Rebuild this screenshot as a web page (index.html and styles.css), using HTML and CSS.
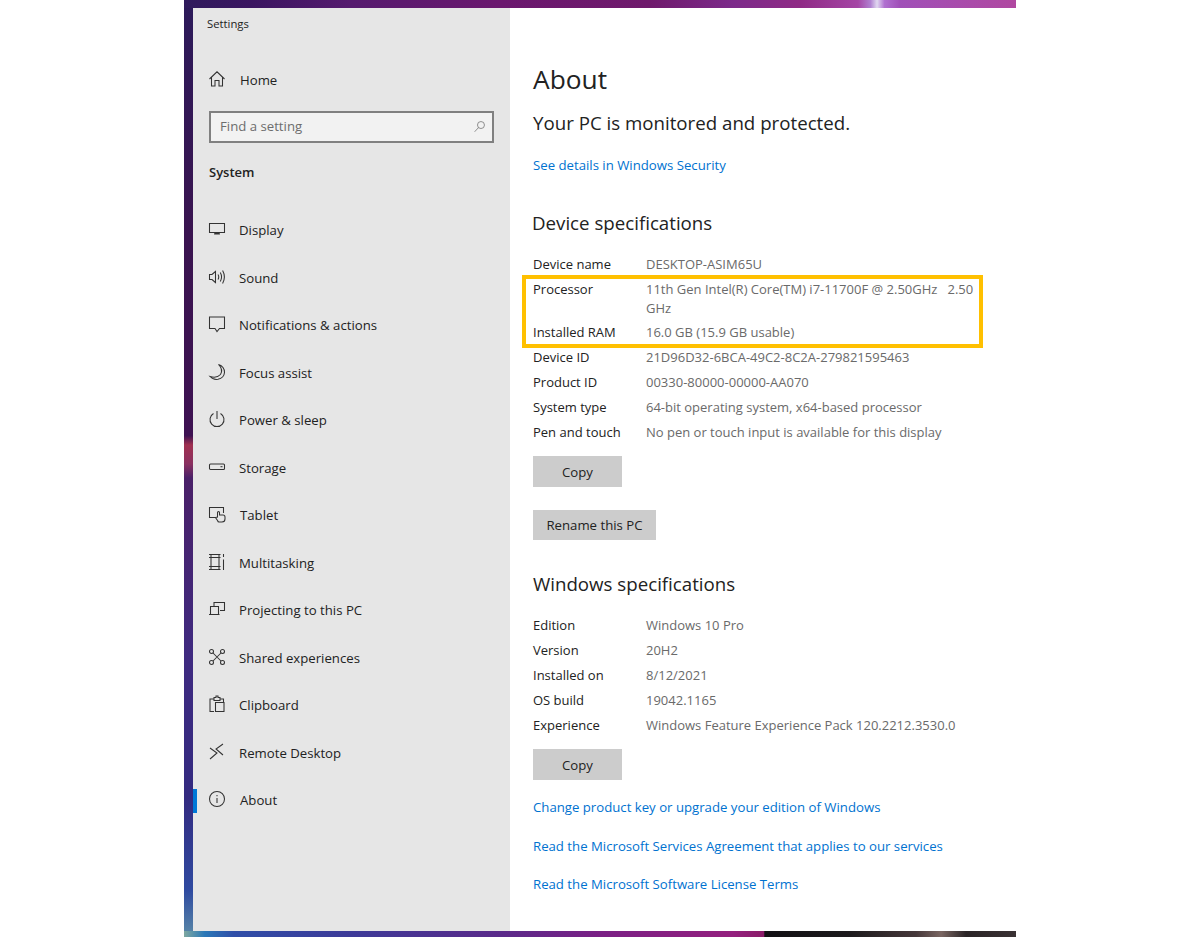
FILE: index.html
```html
<!DOCTYPE html>
<html lang="en">
<head>
<meta charset="utf-8">
<title>Settings - About</title>
<link rel="stylesheet" href="styles.css">
</head>
<body>
<div class="desktop">
  <div class="window">
    <aside class="sidebar">
      <div class="app-title">Settings</div>
      <a class="home">
        <svg class="icon" viewBox="0 0 18 18"><path d="M1.500 9 9 1.800 16.500 9M3.500 7.500V16H7V10.500H11V16H14.500V7.500"/></svg>
        <span>Home</span>
      </a>
      <div class="search">
        <span>Find a setting</span>
        <svg class="search-icon" viewBox="0 0 16 16"><circle cx="9.800" cy="6.200" r="4.300"/><path d="M6.800 9.300 2 14.500"/></svg>
      </div>
      <div class="section">System</div>
      <nav class="nav">
        <a class="nav-item">
          <svg class="icon" viewBox="0 0 18 18"><path d="M1.500 3.500H16.500V12.500H1.500Z"/><path class="solid" d="M6.500 12.500H11.500L12 14.500H6Z"/></svg>
          <span>Display</span>
        </a>
        <a class="nav-item">
          <svg class="icon" viewBox="0 0 18 18"><path d="M1.500 6.500H4L7.500 3.500V14.500L4 11.500H1.500ZM10 6.500Q11.500 9 10 11.500M12.300 4.500Q14.800 9 12.300 13.500M14.600 2.500Q18.200 9 14.600 15.500"/></svg>
          <span>Sound</span>
        </a>
        <a class="nav-item">
          <svg class="icon" viewBox="0 0 18 18"><path d="M1.500 2H16.500V13.500H11.500L9 16.500 7 13.500H1.500Z"/></svg>
          <span>Notifications &amp; actions</span>
        </a>
        <a class="nav-item">
          <svg class="icon" viewBox="0 0 18 18"><path d="M10.500 1.500Q15.500 6.500 12.500 11.500 9 15.500 2 13.500 5 17 10 16.300 16 15 16.500 9.500 16.500 3.500 10.500 1.500Z"/></svg>
          <span>Focus assist</span>
        </a>
        <a class="nav-item">
          <svg class="icon" viewBox="0 0 18 18"><path d="M5.500 3.500A7 7 0 1 0 12.500 3.500M9 1V9"/></svg>
          <span>Power &amp; sleep</span>
        </a>
        <a class="nav-item">
          <svg class="icon" viewBox="0 0 18 18"><rect x="1.500" y="6" width="15" height="5.500" rx="1"/><path d="M12.500 8.700H14.500"/></svg>
          <span>Storage</span>
        </a>
        <a class="nav-item wide">
          <svg class="icon" viewBox="0 0 18 18"><path d="M8 12.500H1.500V2.500H15.500V8M9.500 15.500 7.500 12.500 9.500 12V7.500Q9.500 6.500 10.500 6.500 11.500 6.500 11.500 7.500V10H15Q17 10 17 12V14Q17 17 14 17H11Q10 17 9.500 15.500Z"/></svg>
          <span>Tablet</span>
        </a>
        <a class="nav-item">
          <svg class="icon" viewBox="0 0 18 18"><path d="M1 1.500H12.500M1 16.500H12.500M3 1.500V16.500M11 1.500V16.500M1 4.500H12.500M1 13.500H12.500M15.500 1V4M15.500 6.500V17"/></svg>
          <span>Multitasking</span>
        </a>
        <a class="nav-item">
          <svg class="icon" viewBox="0 0 18 18"><path d="M6 6V2.500H16.500V10.500H12M1 14.500H11.500M2.500 14.500V6.500H10.500V14.500"/></svg>
          <span>Projecting to this PC</span>
        </a>
        <a class="nav-item">
          <svg class="icon" viewBox="0 0 18 18"><circle cx="3.500" cy="3.500" r="2"/><circle cx="14.500" cy="3.500" r="2"/><circle cx="3.500" cy="14.500" r="2"/><circle cx="14.500" cy="14.500" r="2"/><path d="M5 5 13 13M13 5 5 13"/></svg>
          <span>Shared experiences</span>
        </a>
        <a class="nav-item">
          <svg class="icon" viewBox="0 0 18 18"><path d="M6 4H2V16.500H6M12 4H15.500V7M6 2.500H8V1H10V2.500H12V5.500H6ZM7.500 7.500H16V16.500H7.500Z"/></svg>
          <span>Clipboard</span>
        </a>
        <a class="nav-item">
          <svg class="icon" viewBox="0 0 18 18"><path d="M2 5 9 10 2 16M15 1 8 6 15 12"/></svg>
          <span>Remote Desktop</span>
        </a>
        <a class="nav-item wide active">
          <svg class="icon" viewBox="0 0 18 18"><circle cx="9" cy="9" r="7.500"/><path d="M9 8V13M9 5V6.300"/></svg>
          <span>About</span>
        </a>
      </nav>
    </aside>
    <main class="content">
      <h1 class="page-title">About</h1>
      <p class="status">Your PC is monitored and protected.</p>
      <a class="link security-link">See details in Windows Security</a>
      <h2 class="heading device-heading">Device specifications</h2>
      <dl class="specs">
        <div class="spec"><dt>Device name</dt><dd>DESKTOP-ASIM65U</dd></div>
        <div class="marked">
          <div class="spec tight"><dt>Processor</dt><dd>11th Gen Intel(R) Core(TM) i7-11700F @ 2.50GHz &nbsp; 2.50 GHz</dd></div>
          <div class="spec"><dt>Installed RAM</dt><dd>16.0 GB (15.9 GB usable)</dd></div>
          <span class="marker"></span>
        </div>
        <div class="spec"><dt>Device ID</dt><dd>21D96D32-6BCA-49C2-8C2A-279821595463</dd></div>
        <div class="spec"><dt>Product ID</dt><dd>00330-80000-00000-AA070</dd></div>
        <div class="spec"><dt>System type</dt><dd>64-bit operating system, x64-based processor</dd></div>
        <div class="spec"><dt>Pen and touch</dt><dd>No pen or touch input is available for this display</dd></div>
      </dl>
      <button class="btn copy">Copy</button>
      <button class="btn rename">Rename this PC</button>
      <h2 class="heading windows-heading">Windows specifications</h2>
      <dl class="specs">
        <div class="spec"><dt>Edition</dt><dd>Windows 10 Pro</dd></div>
        <div class="spec"><dt>Version</dt><dd>20H2</dd></div>
        <div class="spec"><dt>Installed on</dt><dd>8/12/2021</dd></div>
        <div class="spec"><dt>OS build</dt><dd>19042.1165</dd></div>
        <div class="spec"><dt>Experience</dt><dd>Windows Feature Experience Pack 120.2212.3530.0</dd></div>
      </dl>
      <button class="btn copy">Copy</button>
      <div class="links">
        <a class="link">Change product key or upgrade your edition of Windows</a>
        <a class="link">Read the Microsoft Services Agreement that applies to our services</a>
        <a class="link">Read the Microsoft Software License Terms</a>
      </div>
    </main>
  </div>
</div>
</body>
</html>
```
FILE: styles.css
```css
* { box-sizing: border-box; }
html, body { margin: 0; padding: 0; background: #fff; }
body {
  font-family: "Open Sans", "Noto Sans", "Liberation Sans", sans-serif;
  font-size: 13px;
  color: #222;
  height: 937px;
  overflow: hidden;
}
.desktop {
  width: 832px;
  height: 937px;
  margin: 0 auto;
  padding: 8px 0 6px 9px;
  background-color: #3a1a60;
  background-repeat: no-repeat;
  background-image:
    linear-gradient(90deg, #2f1a5c 0, #3a1560 8%, #551a6e 20%, #6a176e 38%, #6f1a6c 56%, #7c2a8a 66%, #8f2a85 74%, #a545a5 81%, #b080d0 82.500%, #e0d8f0 83.300%, #b070d0 84.200%, #a050b8 86%, #b048a0 100%),
    linear-gradient(90deg, #7fa8a0 0, #2a78b8 2.500%, #2f4ea8 6%, #3d3a98 20%, #5a2a8a 38%, #7a2085 50%, #94207e 66%, #8a1c68 69.700%, #121014 69.800%, #1c1a1c 80%, #46383a 88%, #7a6662 91%, #2a2426 94%, #3a3234 100%),
    linear-gradient(180deg, #2c1a5a 0, #3a1450 25%, #3e1252 46.500%, #a03050 47.500%, #8a3060 49.500%, #4a2068 51%, #3f2a80 70%, #332a80 85%, #2f4aa0 95%, #5a8aa8 100%);
  background-size: 100% 8px, 100% 6px, 9px 100%;
  background-position: 0 0, 0 100%, 0 0;
}
.window {
  display: flex;
  height: 923px;
  background: #fff;
}

/* sidebar */
.sidebar {
  width: 317px;
  flex: none;
  background: #e6e6e6;
  display: flex;
  flex-direction: column;
}
.app-title {
  font-size: 11.300px;
  line-height: 16px;
  margin: 8px 0 0 14px;
}
.home {
  display: flex;
  align-items: center;
  gap: 14px;
  height: 20px;
  margin: 38px 0 0 15px;
  font-size: 13.200px;
}
.icon {
  width: 18px;
  height: 18px;
  flex: none;
  margin-top: -2px;
  fill: none;
  stroke: #333;
  stroke-width: 1.050;
}
.icon .solid { fill: #333; stroke: none; }
.search {
  width: 285px;
  height: 32px;
  margin: 21px 0 0 16px;
  padding: 0 6px 2px 9px;
  display: flex;
  align-items: center;
  justify-content: space-between;
  background: #f2f2f2;
  border: 2px solid #808080;
  color: #6d6d6d;
  font-size: 13.200px;
}
.search-icon {
  width: 13px;
  height: 15px;
  fill: none;
  stroke: #777;
  stroke-width: 1;
}
.section {
  font-size: 13px;
  font-weight: 600;
  line-height: 18px;
  margin: 20px 0 0 16px;
}
.nav {
  margin-top: 25.500px;
  display: flex;
  flex-direction: column;
}
.nav-item {
  height: 47.500px;
  display: flex;
  align-items: center;
  gap: 13px;
  padding-left: 15px;
  font-size: 13.200px;
  position: relative;
}
.nav-item.wide { gap: 14px; }
.nav-item.active::before {
  content: "";
  position: absolute;
  left: 0;
  top: 12px;
  width: 4px;
  height: 24px;
  background: #0078d7;
}

/* content */
.content {
  flex: 1;
  padding-left: 23px;
  display: flex;
  flex-direction: column;
  align-items: flex-start;
}
.page-title {
  margin: 51px 0 0;
  font-size: 26.300px;
  font-weight: 400;
  line-height: 40px;
}
.status {
  margin: 10px 0 0;
  font-size: 18.700px;
  line-height: 28px;
}
.link {
  color: #0072d0;
  font-size: 13.200px;
  line-height: 18px;
}
.security-link { margin-top: 19px; }
.heading {
  margin: 0;
  font-size: 18.700px;
  font-weight: 400;
  line-height: 28px;
}
.device-heading { margin: 35px 0 0 -1px; }
.windows-heading { margin-top: 30px; }
.specs {
  margin: 18px 0 8px;
  width: 445px;
}
.spec {
  display: flex;
  line-height: 19px;
  padding-bottom: 6px;
  font-size: 13px;
}
.spec.tight { padding-bottom: 5px; }
.spec dt { width: 113px; flex: none; }
.spec dd { margin: 0; color: #6a6a6a; }
.marked { position: relative; }
.marker {
  position: absolute;
  left: -11px;
  right: -5px;
  top: -5px;
  bottom: 0;
  border: 4px solid #ffc000;
}
.btn {
  display: block;
  border: 0;
  padding: 0;
  background: #ccc;
  color: #222;
  font: inherit;
  font-size: 13.200px;
  height: 31px;
}
.copy { width: 89px; }
.rename { width: 123px; margin-top: 23px; height: 30px; }
.links {
  display: flex;
  flex-direction: column;
  gap: 20.500px;
  margin-top: 18px;
}
```
